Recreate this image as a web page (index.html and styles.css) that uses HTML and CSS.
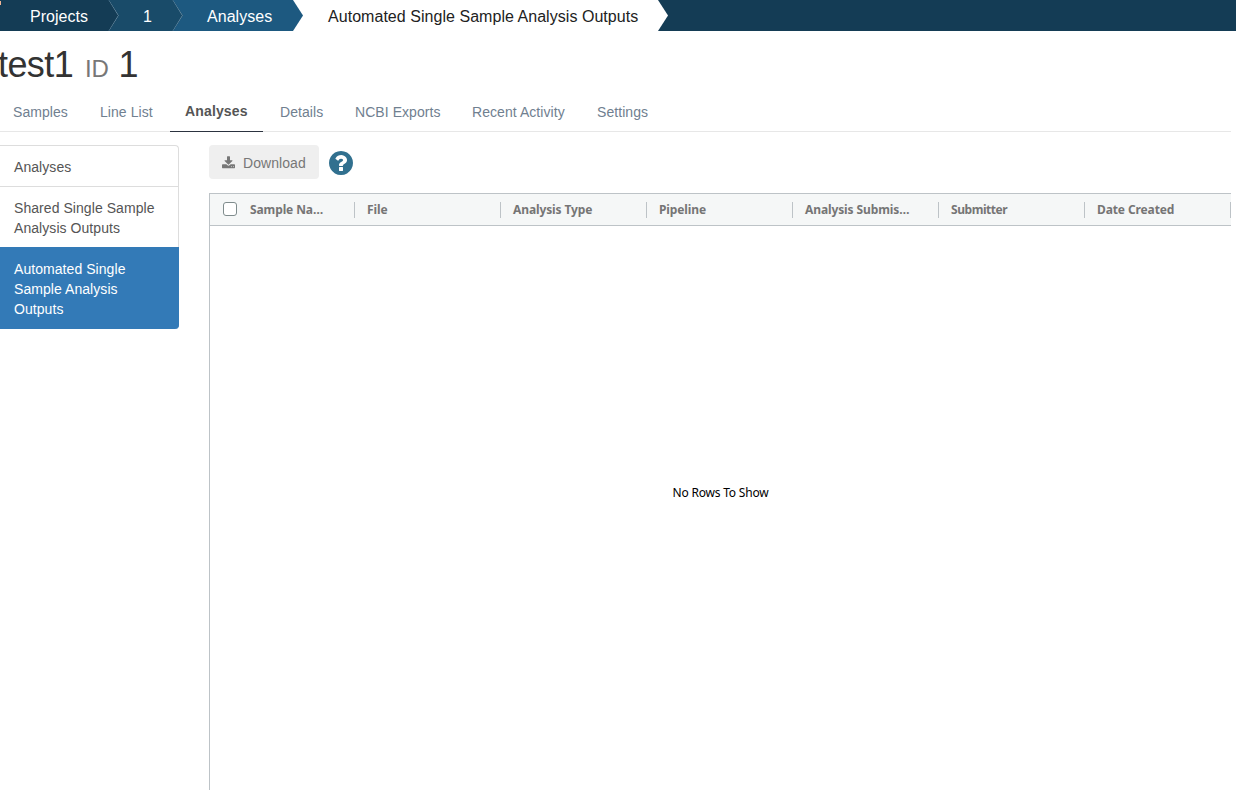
FILE: index.html
```html
<!DOCTYPE html>
<html lang="en">
<head>
<meta charset="utf-8">
<title>test1 - Automated Single Sample Analysis Outputs</title>
<link rel="stylesheet" href="styles.css">
</head>
<body>
<nav class="crumbs">
  <a class="crumb crumb-projects"><span>Projects</span><svg class="chevron" viewBox="0 0 11 31"><path d="M1 0L10.500 15.500L1 31"/></svg></a>
  <a class="crumb crumb-id"><span>1</span><svg class="chevron" viewBox="0 0 11 31"><path d="M1 0L10.500 15.500L1 31"/></svg></a>
  <a class="crumb crumb-analyses"><span>Analyses</span></a>
  <a class="crumb crumb-current"><span>Automated Single Sample Analysis Outputs</span></a>
  <i class="corner"></i>
</nav>
<main class="page">
  <h1 class="title"><span>test1</span><small>ID</small><span>1</span></h1>
  <ul class="tabs">
    <li class="tab tab-samples">Samples</li>
    <li class="tab tab-lines">Line List</li>
    <li class="tab active">Analyses</li>
    <li class="tab tab-details">Details</li>
    <li class="tab tab-ncbi">NCBI Exports</li>
    <li class="tab tab-recent">Recent Activity</li>
    <li class="tab tab-settings">Settings</li>
  </ul>
  <div class="content">
    <aside class="side">
      <a class="side-item">Analyses</a>
      <a class="side-item">Shared Single Sample<br>Analysis Outputs</a>
      <a class="side-item selected">Automated Single<br>Sample Analysis<br>Outputs</a>
    </aside>
    <section class="outputs">
      <div class="toolbar">
        <button class="download" disabled>
          <svg width="13" height="13" viewBox="0 0 1664 1600"><path d="M1280 1344q0-26-19-45t-45-19-45 19-19 45 19 45 45 19 45-19 19-45zm256 0q0-26-19-45t-45-19-45 19-19 45 19 45 45 19 45-19 19-45zm128-224v320q0 40-28 68t-68 28H96q-40 0-68-28t-28-68v-320q0-40 28-68t68-28h465l135 136q58 56 136 56t136-56l136-136h464q40 0 68 28t28 68zm-325-569q17 41-14 70l-448 448q-18 19-45 19t-45-19L339 621q-31-29-14-70 17-39 59-39h256V64q0-26 19-45t45-19h256q26 0 45 19t19 45v448h256q42 0 59 39z"/></svg>
          <span>Download</span>
        </button>
        <svg class="help" width="24" height="24" viewBox="0 0 1536 1536"><path d="M896 1248v-192q0-14-9-23t-23-9H672q-14 0-23 9t-9 23v192q0 14 9 23t23 9h192q14 0 23-9t9-23zm256-672q0-88-55.500-163T958 297t-170-41q-243 0-371 213-15 24 8 42l132 100q7 6 19 6 16 0 25-12 53-68 86-92 34-24 86-24 48 0 85.500 26t37.500 59q0 38-20 61t-68 45q-63 28-115.500 86.500T640 892v36q0 14 9 23t23 9h192q14 0 23-9t9-23q0-19 21.500-49.500T972 829q32-18 49-28.500t46-35 44.500-48 28-60.500 12.500-81zm384 192q0 209-103 385.500T1153.500 1433 768 1536t-385.500-103T103 1153.500 0 768t103-385.500T382.500 103 768 0t385.500 103T1433 382.500 1536 768z"/></svg>
      </div>
      <div class="grid">
        <div class="grid-head">
          <div class="col first"><i class="checkbox"></i><span>Sample Na…</span></div>
          <div class="col"><span>File</span></div>
          <div class="col"><span>Analysis Type</span></div>
          <div class="col"><span>Pipeline</span></div>
          <div class="col"><span>Analysis Submis…</span></div>
          <div class="col submitter"><span>Submitter</span></div>
          <div class="col"><span>Date Created</span></div>
        </div>
        <div class="grid-body"><span>No Rows To Show</span></div>
      </div>
    </section>
  </div>
</main>
</body>
</html>
```
FILE: styles.css
```css
* { box-sizing: border-box; }
body {
  margin: 0;
  height: 790px;
  overflow: hidden;
  background: #fff;
  color: #333;
  font: 14px/20px "Liberation Sans", Arial, sans-serif;
  letter-spacing: .06px;
}
.crumbs {
  display: flex;
  position: relative;
  height: 31px;
  background: #143c55;
  font-size: 16px;
  line-height: 34px;
  letter-spacing: .04px;
  white-space: nowrap;
}
.crumb {
  position: relative;
  height: 31px;
  margin-right: -10px;
  color: #fff;
  clip-path: polygon(0 0, calc(100% - 10px) 0, 100% 15.5px, calc(100% - 10px) 100%, 0 100%);
}
.crumb-projects { z-index: 4; width: 119px; padding-left: 30px; background: #143c55; }
.crumb-id { z-index: 3; width: 74px; padding-left: 34px; background: #194b69; }
.crumb-analyses { z-index: 2; width: 130px; padding-left: 34px; background: #1d5980; }
.crumb-current { z-index: 1; width: 375px; padding-left: 35px; background: #fff; color: #222; }
.chevron {
  position: absolute;
  top: 0;
  right: 0;
  width: 11px;
  height: 31px;
  fill: none;
  stroke: #6b8fa6;
  stroke-width: 1;
}
.corner { position: absolute; z-index: 5; top: 1px; left: 0; width: 1px; height: 4px; background: #f0b595; }
.page { width: 1231px; }
.title {
  display: flex;
  align-items: baseline;
  height: 61px;
  margin: 0 0 0 -2px;
  padding-top: 14px;
  font-size: 36px;
  line-height: 40px;
  font-weight: 400;
  letter-spacing: -.6px;
}
.title small { margin: 0 10px 0 12px; font-size: 24px; letter-spacing: -.3px; color: #777; }
.tabs {
  display: flex;
  height: 40px;
  margin: 0;
  padding: 0;
  list-style: none;
  border-bottom: 1px solid #e7e7e7;
  color: #708090;
  white-space: nowrap;
}
.tab { height: 40px; padding-top: 10px; }
.tab-samples { width: 87px; padding-left: 13px; }
.tab-lines { width: 83px; padding-left: 13px; }
.tab.active { width: 93px; padding: 9px 0 0 15px; border-bottom: 1px solid #2c3340; color: #555; font-weight: 700; letter-spacing: .15px; }
.tab-details { width: 76px; padding-left: 17px; }
.tab-ncbi { width: 117px; padding-left: 16px; }
.tab-recent { width: 125px; padding-left: 16px; }
.tab-settings { padding-left: 16px; }
.content { display: flex; gap: 30px; padding-top: 13px; }
.side { flex: none; width: 179px; }
.side-item {
  display: block;
  padding: 11px 14px 9px;
  border: 1px solid #ddd;
  border-left: 0;
  border-bottom: 0;
  color: #555;
  white-space: nowrap;
}
.side-item:first-child { border-radius: 0 4px 0 0; }
.side-item.selected { padding-bottom: 10px; background: #337ab7; border-color: #337ab7; border-radius: 0 0 4px 0; color: #fff; }
.outputs { flex: 1; min-width: 0; }
.toolbar { display: flex; align-items: center; gap: 10px; height: 34px; }
.download {
  display: flex;
  align-items: center;
  gap: 8px;
  width: 110px;
  height: 34px;
  padding: 2px 0 0 13px;
  border: 0;
  border-radius: 4px;
  background: #efefef;
  color: #777;
  font: inherit;
  letter-spacing: inherit;
}
.download svg { margin-top: -1px; fill: #777; }
.help { margin-top: 2px; fill: #31708f; }
.grid { height: 620px; margin-top: 14px; border: 1px solid #bdc3c7; border-right: 0; color: #000; font: 12px "Noto Sans", sans-serif; letter-spacing: -.11px; }
.grid-head { display: flex; height: 32px; align-items: center; border-bottom: 1px solid #bdc3c7; background: #f5f7f7; }
.col {
  display: flex;
  align-items: center;
  width: 146px;
  height: 16px;
  padding-left: 12px;
  border-right: 1px solid #bdc3c7;
  color: #757575;
  font-weight: 700;
  white-space: nowrap;
}
.col.first { width: 145px; padding-left: 13px; }
.col.submitter { letter-spacing: -.45px; }
.checkbox { width: 14px; height: 14px; margin: -2px 13px 0 0; border: 1px solid #7f8c8d; border-radius: 3px; background: #fff; }
.grid-body { display: flex; height: 532px; align-items: center; justify-content: center; letter-spacing: -.2px; }
```
